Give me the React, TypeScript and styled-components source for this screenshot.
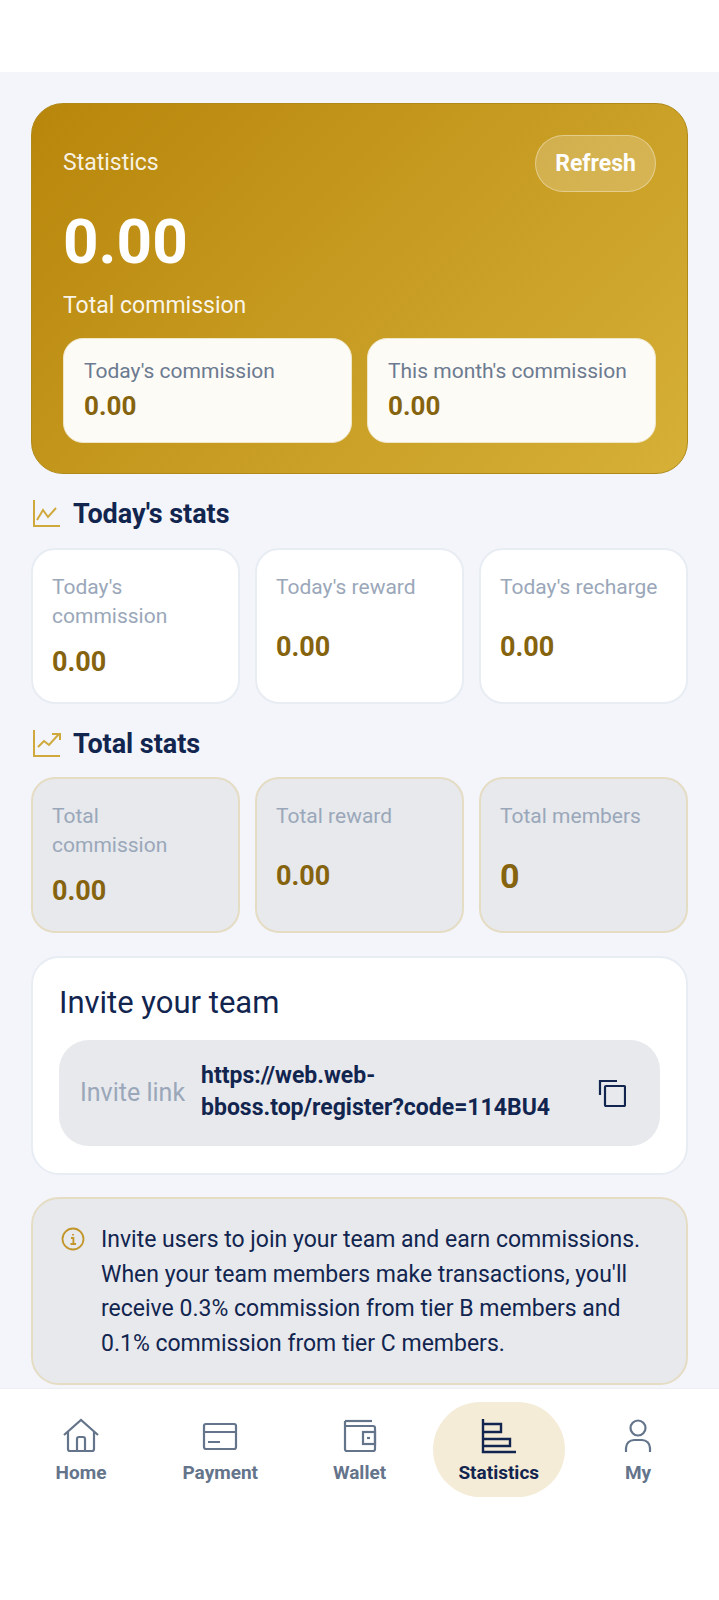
import React from "react";
import styled, { createGlobalStyle } from "styled-components";

const Global = createGlobalStyle`
  html, body { margin: 0; padding: 0; background: #fff; }
  body { font-family: Roboto, "Liberation Sans", sans-serif; width: 719px; height: 1600px; overflow: hidden; }
  * { box-sizing: border-box; }
`;
const Page = styled.div`width: 719px; height: 1600px; display: flex; flex-direction: column; background: #fff;`;
const Main = styled.main`margin-top: 72px; height: 1316px; background: #f3f5fa; padding: 31px 31px 0 31px; display: flex; flex-direction: column; overflow: hidden;`;
const Hero = styled.section`
  height: 371px; border-radius: 32px; border: 1px solid #b08a18; padding: 30px 31px 0;
  background: linear-gradient(135deg, #b8860b 0%, #d6b037 100%);
  color: #fff; display: flex; flex-direction: column; flex: none;
`;
const HeroTop = styled.div`display: flex; justify-content: space-between; align-items: center; height: 58px;`;
const HeroLabel = styled.div`font-size: 23px; margin-top: -2px; color: rgba(255,255,255,.9);`;
const Refresh = styled.div`
  width: 121px; height: 57px; border-radius: 29px; border: 1.5px solid rgba(255,255,255,.35); background: rgba(255,255,255,.2);
  display: flex; align-items: center; justify-content: center; font-size: 23px; font-weight: 700;
`;
const HeroValue = styled.div`font-size: 62px; font-weight: 700; line-height: 72px; margin-top: 14px;`;
const HeroCaption = styled.div`font-size: 23px; line-height: 28px; margin-top: 14px; color: rgba(255,255,255,.92);`;
const HeroGrid = styled.div`display: grid; grid-template-columns: 289px 289px; gap: 15px; margin-top: 18px;`;
const SubCard = styled.div`
  height: 105px; border-radius: 20px; background: #fdfbf6; border: 1.5px solid #f0e6c8; padding: 19px 20px 0 20px;
`;
const SubLabel = styled.div`font-size: 21px; line-height: 26px; color: #6b7a90; white-space: nowrap;`;
const SubValue = styled.div`font-size: 26px; font-weight: 700; line-height: 30px; margin-top: 7px; color: #86640f;`;
const SectionHead = styled.div<{ $top: number }>`display: flex; align-items: center; gap: 12px; height: 30px; margin-top: ${p => p.$top}px; font-size: 27px; font-weight: 700; color: #12254f; padding-left: 2px; flex: none; letter-spacing: -0.05px;`;
const StatGrid = styled.div<{ $top: number }>`display: grid; grid-template-columns: 209px 209px 209px; gap: 15px; margin-top: ${p => p.$top}px; flex: none;`;
const StatCard = styled.div<{ $muted?: boolean }>`
  height: 156px; border-radius: 24px; padding: 23px 24px 0 19px;
  background: ${p => (p.$muted ? "#e7e9ed" : "#fff")};
  border: 2px solid ${p => (p.$muted ? "#e5dcc4" : "#e8ecf3")};
`;
const StatLabel = styled.div`font-size: 21px; line-height: 29px; color: #9aa7b9; min-height: 29px; margin-right: -12px;`;
const NarrowLabel = styled(StatLabel)`margin-right: 0;`;
const StatValue = styled.div<{ $large?: boolean; $top: number }>`font-size: ${p => (p.$large ? 34 : 27)}px; font-weight: 700; line-height: 30px; margin-top: ${p => p.$top}px; color: #86640f;`;
const InviteCard = styled.section`flex: none; height: 219px; margin-top: 23px; background: #fff; border: 2px solid #e8ecf3; border-radius: 28px; padding: 27px 26px 0;`;
const InviteTitle = styled.div`font-size: 31px; line-height: 36px; color: #12254f;`;
const LinkBox = styled.div`height: 106px; margin-top: 19px; border-radius: 30px; background: #e7e9ed; display: flex; align-items: center; padding: 0 34px 0 21px;`;
const LinkLabel = styled.div`font-size: 25px; color: #9aa7b9; white-space: nowrap; width: 121px; flex: none; margin-top: -2px;`;
const LinkValue = styled.div`font-size: 23px; font-weight: 700; line-height: 32px; color: #12254f; flex: 1; width: 0; white-space: pre; margin-top: -2px;`;
const InfoCard = styled.section`flex: none; height: 188px; margin-top: 22px; background: #e7e9ed; border: 2px solid #e5dcc4; border-radius: 28px; padding: 24px 20px 0 28px; display: flex; gap: 16px;`;
const InfoText = styled.div`font-size: 23px; line-height: 34.7px; color: #12254f; white-space: pre;`;
const Nav = styled.nav`height: 212px; background: #fff; border-top: 1px solid #eceef2; display: flex; padding: 13px 15px 0; align-items: flex-start; justify-content: space-between;`;
const NavItem = styled.div<{ $active?: boolean }>`
  width: 132px; height: 95px; border-radius: 48px; display: flex; flex-direction: column; align-items: center; padding-top: 16px;
  background: ${p => (p.$active ? "#f5ecd8" : "transparent")};
  color: ${p => (p.$active ? "#12254f" : "#64748b")};
  font-size: 19px; font-weight: 700;
`;
const NavLabel = styled.div`line-height: 22px; margin-top: 8px;`;

const Today = () => (
  <svg width="28" height="28" viewBox="0 0 28 28" fill="none" stroke="#cfa93c" strokeWidth="2"><path d="M1 0v26h26" /><path d="M4 20l6-10 5 7 8-9" /></svg>
);
const Total = () => (
  <svg width="28" height="28" viewBox="0 0 28 28" fill="none" stroke="#cfa93c" strokeWidth="2"><path d="M1 0v26h26" /><path d="M5 17l6-6 5 4 10-11M19 4h8v6" /></svg>
);
const ico = { width: 36, height: 36, viewBox: "0 0 36 36", fill: "none", stroke: "currentColor", strokeWidth: 2.2 };
const HomeI = () => <svg {...ico}><path d="M1 17L18 2l17 15" /><path d="M5 14v17a2 2 0 002 2h22a2 2 0 002-2V14" /><path d="M14 33V21a2 2 0 012-2h4a2 2 0 012 2v12" /></svg>;
const CardI = () => <svg {...ico}><rect x="2" y="6" width="32" height="25" rx="2" /><path d="M2 14h32M6 24h12" /></svg>;
const WalletI = () => <svg {...ico}><path d="M3 3h27" /><path d="M3 3v28a2 2 0 002 2h26a2 2 0 002-2V10a2 2 0 00-2-2H3" /><rect x="21" y="14" width="12" height="12" /><path d="M25 20h3" /></svg>;
const BarsI = () => <svg {...ico} strokeWidth={2.4}><path d="M2 1v33h33" /><path d="M2 6h18v8H2M2 21h27v7H2" /></svg>;
const UserI = () => <svg width="28" height="36" viewBox="0 0 28 36" fill="none" stroke="currentColor" strokeWidth="2.2"><circle cx="14" cy="10" r="7.5" /><path d="M2 34v-4a8 8 0 018-8h8a8 8 0 018 8v4" /></svg>;
const CopyI = () => <svg width="28" height="28" viewBox="0 0 28 28" fill="none" stroke="#12254f" strokeWidth="2.2"><path d="M2 16V2h17" /><rect x="7" y="7" width="20" height="20" rx="1" /></svg>;
const InfoI = () => <svg width="24" height="24" viewBox="0 0 24 24" fill="none" stroke="#c2962b" strokeWidth="1.8" style={{ flex: "none", marginTop: 4 }}><circle cx="12" cy="12" r="10.5" /><path d="M10 11h2.4v6M9.5 17h5.5M12 7v1.4" /></svg>;

export default function App() {
  return (
    <Page>
      <Global />
      <Main>
        <Hero>
          <HeroTop><HeroLabel>Statistics</HeroLabel><Refresh>Refresh</Refresh></HeroTop>
          <HeroValue>0.00</HeroValue>
          <HeroCaption>Total commission</HeroCaption>
          <HeroGrid>
            <SubCard><SubLabel>Today's commission</SubLabel><SubValue>0.00</SubValue></SubCard>
            <SubCard><SubLabel>This month's commission</SubLabel><SubValue>0.00</SubValue></SubCard>
          </HeroGrid>
        </Hero>
        <SectionHead $top={25}><Today />Today's stats</SectionHead>
        <StatGrid $top={19}>
          <StatCard><NarrowLabel>Today's commission</NarrowLabel><StatValue $top={16}>0.00</StatValue></StatCard>
          <StatCard><StatLabel>Today's reward</StatLabel><StatValue $top={30}>0.00</StatValue></StatCard>
          <StatCard><StatLabel>Today's recharge</StatLabel><StatValue $top={30}>0.00</StatValue></StatCard>
        </StatGrid>
        <SectionHead $top={25}><Total />Total stats</SectionHead>
        <StatGrid $top={18}>
          <StatCard $muted><NarrowLabel>Total commission</NarrowLabel><StatValue $top={16}>0.00</StatValue></StatCard>
          <StatCard $muted><StatLabel>Total reward</StatLabel><StatValue $top={30}>0.00</StatValue></StatCard>
          <StatCard $muted><StatLabel>Total members</StatLabel><StatValue $large $top={30}>0</StatValue></StatCard>
        </StatGrid>
        <InviteCard>
          <InviteTitle>Invite your team</InviteTitle>
          <LinkBox>
            <LinkLabel>Invite link</LinkLabel>
            <LinkValue>{"https://web.web-\nbboss.top/register?code=114BU4"}</LinkValue>
            <CopyI />
          </LinkBox>
        </InviteCard>
        <InfoCard>
          <InfoI />
          <InfoText>{"Invite users to join your team and earn commissions.\nWhen your team members make transactions, you'll\nreceive 0.3% commission from tier B members and\n0.1% commission from tier C members."}</InfoText>
        </InfoCard>
      </Main>
      <Nav>
        <NavItem><HomeI /><NavLabel>Home</NavLabel></NavItem>
        <NavItem><CardI /><NavLabel>Payment</NavLabel></NavItem>
        <NavItem><WalletI /><NavLabel>Wallet</NavLabel></NavItem>
        <NavItem $active><BarsI /><NavLabel>Statistics</NavLabel></NavItem>
        <NavItem><UserI /><NavLabel>My</NavLabel></NavItem>
      </Nav>
    </Page>
  );
}
